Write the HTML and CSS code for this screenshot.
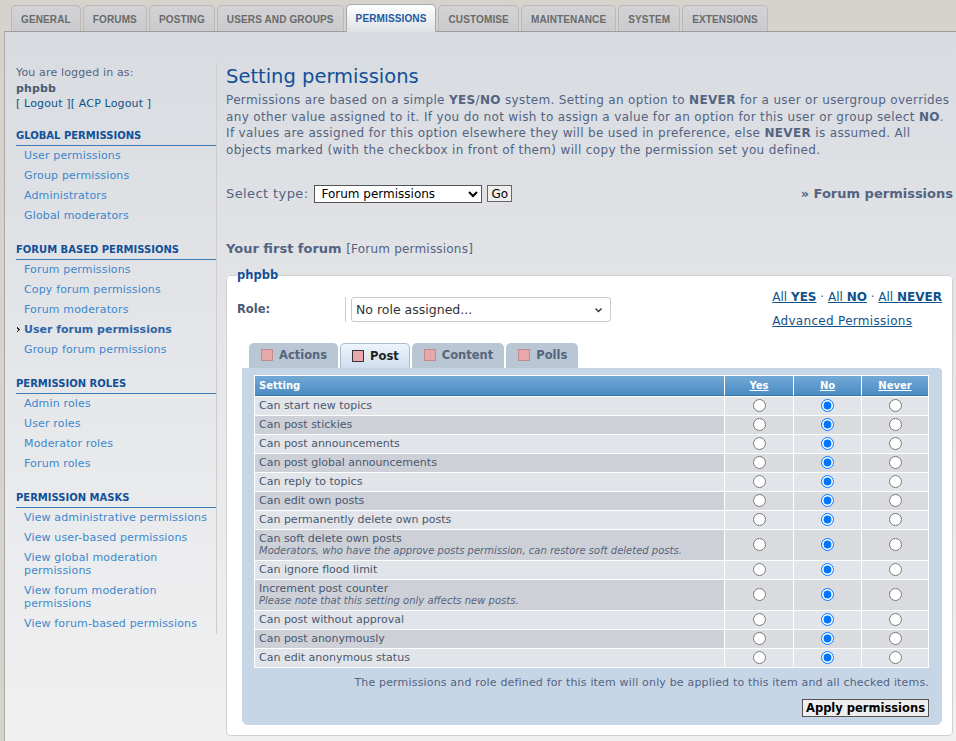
FILE: index.html
```html
<!DOCTYPE html>
<html lang="en">
<head>
<meta charset="utf-8">
<title>Setting permissions</title>
<link rel="stylesheet" href="styles.css">
</head>
<body>
<div class="tabs">
  <a class="tab">General</a>
  <a class="tab">Forums</a>
  <a class="tab">Posting</a>
  <a class="tab">Users and groups</a>
  <a class="tab active">Permissions</a>
  <a class="tab">Customise</a>
  <a class="tab">Maintenance</a>
  <a class="tab">System</a>
  <a class="tab">Extensions</a>
</div>
<div class="page">
  <div class="sidebar">
    <div class="user">You are logged in as:<br><strong>phpbb</strong><br><a class="logout">[&nbsp;Logout&nbsp;]</a><a class="logout">[&nbsp;ACP Logout&nbsp;]</a></div>
    <div class="menu">
      <h3>Global permissions</h3>
      <ul>
        <li><a>User permissions</a></li>
        <li><a>Group permissions</a></li>
        <li><a>Administrators</a></li>
        <li><a>Global moderators</a></li>
      </ul>
    </div>
    <div class="menu">
      <h3>Forum based permissions</h3>
      <ul>
        <li><a>Forum permissions</a></li>
        <li><a>Copy forum permissions</a></li>
        <li><a>Forum moderators</a></li>
        <li class="current"><a><svg class="arrow" width="4" height="6" viewBox="0 0 4 6"><path d="M0 0h1v1h1v1h1v1H2v1H1v1H0V4h1V2H0z" fill="#222"/></svg>User forum permissions</a></li>
        <li><a>Group forum permissions</a></li>
      </ul>
    </div>
    <div class="menu">
      <h3>Permission roles</h3>
      <ul>
        <li><a>Admin roles</a></li>
        <li><a>User roles</a></li>
        <li><a>Moderator roles</a></li>
        <li><a>Forum roles</a></li>
      </ul>
    </div>
    <div class="menu">
      <h3>Permission masks</h3>
      <ul>
        <li><a>View administrative permissions</a></li>
        <li><a>View user-based permissions</a></li>
        <li><a>View global moderation permissions</a></li>
        <li><a>View forum moderation permissions</a></li>
        <li><a>View forum-based permissions</a></li>
      </ul>
    </div>
  </div>

  <div class="main">
    <h1>Setting permissions</h1>
    <p class="intro">Permissions are based on a simple <b>YES</b>/<b>NO</b> system. Setting an option to <b>NEVER</b> for a user or usergroup overrides any other value assigned to it. If you do not wish to assign a value for an option for this user or group select <b>NO</b>. If values are assigned for this option elsewhere they will be used in preference, else <b>NEVER</b> is assumed. All objects marked (with the checkbox in front of them) will copy the permission set you defined.</p>

    <div class="select-row">
      <div class="select-type">
        <label>Select type:</label>
        <select class="type-select"><option>Forum permissions</option></select>
        <button class="go">Go</button>
      </div>
      <div class="crumb">» Forum permissions</div>
    </div>

    <h2 class="forum-title">Your first forum <span>[Forum permissions]</span></h2>

    <fieldset class="perm-box">
      <legend>phpbb</legend>
      <div class="role-area">
        <dl class="role">
          <dt>Role:</dt>
          <dd>
            <div class="select-wrap">
              <select class="role-select"><option>No role assigned...</option></select>
              <svg class="chev" width="7" height="5" viewBox="0 0 7 5"><path d="M0.5 0.5 3.5 3.5 6.5 0.5" fill="none" stroke="#333" stroke-width="1.4"/></svg>
            </div>
          </dd>
        </dl>
        <div class="all-links">
          <div><a>All <b>YES</b></a> · <a>All <b>NO</b></a> · <a>All <b>NEVER</b></a></div>
          <div class="adv"><a>Advanced Permissions</a></div>
        </div>
      </div>

      <div class="ptabs">
        <div class="ptab"><span class="sq"></span>Actions</div>
        <div class="ptab active"><span class="sq"></span>Post</div>
        <div class="ptab"><span class="sq"></span>Content</div>
        <div class="ptab"><span class="sq"></span>Polls</div>
      </div>
      <div class="panel">
        <table class="perm-table">
          <colgroup><col><col class="c-yes"><col class="c-no"><col class="c-never"></colgroup>
          <thead>
            <tr><th class="th-set">Setting</th><th><a>Yes</a></th><th><a>No</a></th><th><a>Never</a></th></tr>
          </thead>
          <tbody>
            <tr class="r1"><td class="set">Can start new topics</td><td><input type="radio" name="a1"></td><td><input type="radio" name="a1" checked></td><td><input type="radio" name="a1"></td></tr>
            <tr class="r2"><td class="set">Can post stickies</td><td><input type="radio" name="a2"></td><td><input type="radio" name="a2" checked></td><td><input type="radio" name="a2"></td></tr>
            <tr class="r1"><td class="set">Can post announcements</td><td><input type="radio" name="a3"></td><td><input type="radio" name="a3" checked></td><td><input type="radio" name="a3"></td></tr>
            <tr class="r2"><td class="set">Can post global announcements</td><td><input type="radio" name="a4"></td><td><input type="radio" name="a4" checked></td><td><input type="radio" name="a4"></td></tr>
            <tr class="r1"><td class="set">Can reply to topics</td><td><input type="radio" name="a5"></td><td><input type="radio" name="a5" checked></td><td><input type="radio" name="a5"></td></tr>
            <tr class="r2"><td class="set">Can edit own posts</td><td><input type="radio" name="a6"></td><td><input type="radio" name="a6" checked></td><td><input type="radio" name="a6"></td></tr>
            <tr class="r1"><td class="set">Can permanently delete own posts</td><td><input type="radio" name="a7"></td><td><input type="radio" name="a7" checked></td><td><input type="radio" name="a7"></td></tr>
            <tr class="r2"><td class="set">Can soft delete own posts<br><i>Moderators, who have the approve posts permission, can restore soft deleted posts.</i></td><td><input type="radio" name="a8"></td><td><input type="radio" name="a8" checked></td><td><input type="radio" name="a8"></td></tr>
            <tr class="r1"><td class="set">Can ignore flood limit</td><td><input type="radio" name="a9"></td><td><input type="radio" name="a9" checked></td><td><input type="radio" name="a9"></td></tr>
            <tr class="r2"><td class="set">Increment post counter<br><i>Please note that this setting only affects new posts.</i></td><td><input type="radio" name="a10"></td><td><input type="radio" name="a10" checked></td><td><input type="radio" name="a10"></td></tr>
            <tr class="r1"><td class="set">Can post without approval</td><td><input type="radio" name="a11"></td><td><input type="radio" name="a11" checked></td><td><input type="radio" name="a11"></td></tr>
            <tr class="r2"><td class="set">Can post anonymously</td><td><input type="radio" name="a12"></td><td><input type="radio" name="a12" checked></td><td><input type="radio" name="a12"></td></tr>
            <tr class="r1"><td class="set">Can edit anonymous status</td><td><input type="radio" name="a13"></td><td><input type="radio" name="a13" checked></td><td><input type="radio" name="a13"></td></tr>
          </tbody>
        </table>
        <p class="note">The permissions and role defined for this item will only be applied to this item and all checked items.</p>
        <div class="apply-row"><button class="apply">Apply permissions</button></div>
      </div>
    </fieldset>
  </div>
</div>
</body>
</html>
```

FILE: styles.css
```css
* { box-sizing: border-box; }
html, body { margin: 0; padding: 0; }
body {
  background: #d6d2cc;
  font-family: "DejaVu Sans", Verdana, sans-serif;
  color: #536482;
  font-size: 11px;
  min-height: 741px;
}
a { cursor: pointer; }

/* top tabs */
.tabs {
  display: flex;
  align-items: flex-end;
  gap: 2px;
  padding: 4px 0 0 11px;
  height: 31px;
  position: relative;
  z-index: 2;
}
.tab {
  display: block;
  height: 26px;
  line-height: 25px;
  padding: 1px 9px 0;
  border: 1px solid #b8b8b8;
  border-bottom: none;
  border-radius: 5px 5px 0 0;
  background: linear-gradient(#d3d3d5, #c9cbce);
  font-family: "Liberation Sans", Arial, sans-serif;
  font-weight: bold;
  font-size: 10px;
  letter-spacing: 0.13px;
  text-transform: uppercase;
  color: #6a6a6a;
}
.tab.active {
  height: 28px;
  line-height: 26px;
  padding-top: 1px;
  margin-bottom: -1px;
  background: linear-gradient(#ffffff, #dee1e5);
  border-color: #a8a8a8;
  color: #1e5aa0;
}

/* page */
.page {
  margin-left: 4px;
  border-top: 1px solid #9c9c9c;
  border-left: 1px solid #a9a9a9;
  background: linear-gradient(#d8dbe0 0, #e9eaec 450px, #f1f1f1 741px);
  display: flex;
  align-items: flex-start;
  padding: 31px 3px 40px 11px;
  min-height: 710px;
}

/* sidebar */
.sidebar {
  width: 201px;
  flex: none;
  border-right: 1px solid #cdcdcd;
  padding-top: 2px;
  letter-spacing: 0.15px;
}
.user {
  line-height: 15.5px;
  color: #536482;
}
.user strong { color: #4a5a72; }
.logout { color: #105289; }
.menu { margin-top: 17px; }
.menu h3 {
  margin: 0;
  font-size: 10px;
  line-height: 14px;
  font-weight: bold;
  text-transform: uppercase;
  color: #115098;
  border-bottom: 1px solid #3f7bb4;
  padding-bottom: 2px;
  letter-spacing: 0;
}
.menu ul { list-style: none; margin: 0; padding: 0; }
.menu li a {
  display: block;
  position: relative;
  padding: 3.5px 2px 3.5px 8px;
  line-height: 13px;
  color: #3c88cc;
}
.menu li.current a { font-weight: bold; color: #2d65a5; letter-spacing: 0; }
.arrow { position: absolute; left: 1px; top: 7px; }

/* main */
.main { flex: 1; margin-left: 9px; min-width: 0; }
h1 {
  margin: 0;
  padding-top: 2px;
  font-size: 19.5px;
  line-height: 24px;
  font-weight: normal;
  color: #115098;
}
.intro {
  margin: 3px 0 0;
  font-size: 12px;
  line-height: 16.7px;
  letter-spacing: 0.34px;
  color: #536482;
}
.select-row {
  margin-top: 26px;
  display: flex;
  justify-content: space-between;
  align-items: center;
}
.select-type { display: flex; align-items: center; }
.select-type label { font-size: 13px; letter-spacing: 0.4px; color: #536482; margin-right: 6px; }
.type-select {
  width: 168px;
  height: 18px;
  font-family: "DejaVu Sans", Verdana, sans-serif;
  font-size: 12px;
  border: 1px solid #555;
  border-radius: 0;
  background: #fff;
  color: #000;
  padding: 0 2px;
}
.go {
  margin-left: 5px;
  height: 17px;
  padding: 0 3px;
  font-family: "DejaVu Sans", Verdana, sans-serif;
  font-size: 12px;
  line-height: 14px;
  background: #efefef;
  border: 1px solid #666;
  color: #000;
}
.crumb { font-size: 13px; font-weight: bold; color: #536482; }

.forum-title {
  margin: 38px 0 0;
  font-size: 13px;
  line-height: 16px;
  font-weight: bold;
  color: #536482;
}
.forum-title span { font-weight: normal; font-size: 12px; letter-spacing: 0.2px; }

/* fieldset */
.perm-box {
  margin: 12px 0 0;
  padding: 7px 10px 10px;
  border: 1px solid #d0d0d0;
  border-radius: 4px;
  background: #fff;
  min-width: 0;
}
.perm-box legend {
  padding: 0;
  font-size: 11.5px;
  line-height: 13px;
  font-weight: bold;
  color: #115098;
}
.role-area { display: flex; justify-content: space-between; align-items: flex-start; }
.role { display: flex; margin: 8px 0 0; }
.role dt {
  width: 108px;
  font-weight: bold;
  font-size: 11.5px;
  padding-top: 5px;
  color: #4b5a72;
}
.role dd {
  margin: 0;
  border-left: 1px solid #cdcdcd;
  padding-left: 5px;
}
.select-wrap { position: relative; width: 260px; height: 25px; }
.role-select {
  -webkit-appearance: none;
  appearance: none;
  width: 260px;
  height: 25px;
  border: 1px solid #c9c9c9;
  border-radius: 3px;
  background: #fff;
  font-family: "DejaVu Sans", Verdana, sans-serif;
  font-size: 12.5px;
  color: #333;
  padding: 0 4px;
}
.chev { position: absolute; right: 9px; top: 11px; pointer-events: none; }
.all-links { font-size: 12px; line-height: 16px; color: #536482; padding-left: 4px; }
.all-links a { color: #105289; text-decoration: underline; }
.all-links .adv { margin-top: 8px; letter-spacing: 0.3px; }

/* permission tabs */
.ptabs { display: flex; gap: 2px; margin: 14px 0 0 12px; }
.ptab {
  height: 25px;
  display: flex;
  align-items: center;
  padding: 0 11px 0 12px;
  border-radius: 5px 5px 0 0;
  background: #b9c6d4;
  font-weight: bold;
  font-size: 11.5px;
  color: #56657c;
}
.ptab.active {
  background: linear-gradient(#eef4fb, #cfdeed);
  border: 1px solid #aabdd0;
  border-bottom: none;
  padding: 0 10px 0 11px;
  color: #222;
}
.sq {
  width: 12px;
  height: 12px;
  background: #e8a7a8;
  border: 1px solid #c48a8b;
  margin-right: 6px;
}
.ptab.active .sq { border-color: #333; }

.panel {
  margin-left: 5px;
  background: #c7d6e7;
  border-radius: 0 4px 6px 6px;
  padding: 7px 13px 8px 12px;
}
.perm-table {
  width: 100%;
  table-layout: fixed;
  border-collapse: separate;
  border-spacing: 0;
  border: 1px solid #fff;
  background: #fff;
}
.c-yes { width: 69px; }
.c-no { width: 68px; }
.c-never { width: 67px; }
.perm-table th {
  height: 20px;
  padding: 0;
  background: linear-gradient(#72a9d6, #4c8bc3);
  border-bottom: 1px solid #3a71a5;
  border-left: 1px solid #fff;
  color: #fff;
  font-size: 10px;
  font-weight: bold;
  text-align: center;
}
.perm-table th.th-set { border-left: none; text-align: left; padding-left: 4px; }
.perm-table th a { color: #fff; text-decoration: underline; }
.perm-table td {
  height: 19px;
  padding: 0;
  line-height: 12px;
  border-top: 1px solid #fff;
  border-left: 1px solid #fff;
  text-align: center;
  vertical-align: middle;
}
.perm-table td.set {
  border-left: none;
  padding: 3px 4px;
  text-align: left;
  font-size: 11px;
  color: #4a5870;
}
.perm-table td.set i { font-size: 10px; color: #56657c; }
.r1 td { background: #e1e4e8; }
.r2 td { background: #d9dbdf; }
.r2 td.set { background: #cdd0d7; }
.perm-table input[type="radio"] {
  display: block;
  margin: 0 auto;
  width: 13px;
  height: 13px;
}
.note {
  margin: 8px 0 0;
  text-align: right;
  font-size: 11px;
  line-height: 14px;
  letter-spacing: 0.17px;
  color: #536482;
}
.apply-row { display: flex; justify-content: flex-end; margin-top: 9px; }
.apply {
  height: 18px;
  padding: 0 3px;
  font-family: "DejaVu Sans", Verdana, sans-serif;
  font-size: 11.5px;
  font-weight: bold;
  line-height: 14px;
  color: #000;
  background: #efefef;
  border: 1px solid #555;
}
```
